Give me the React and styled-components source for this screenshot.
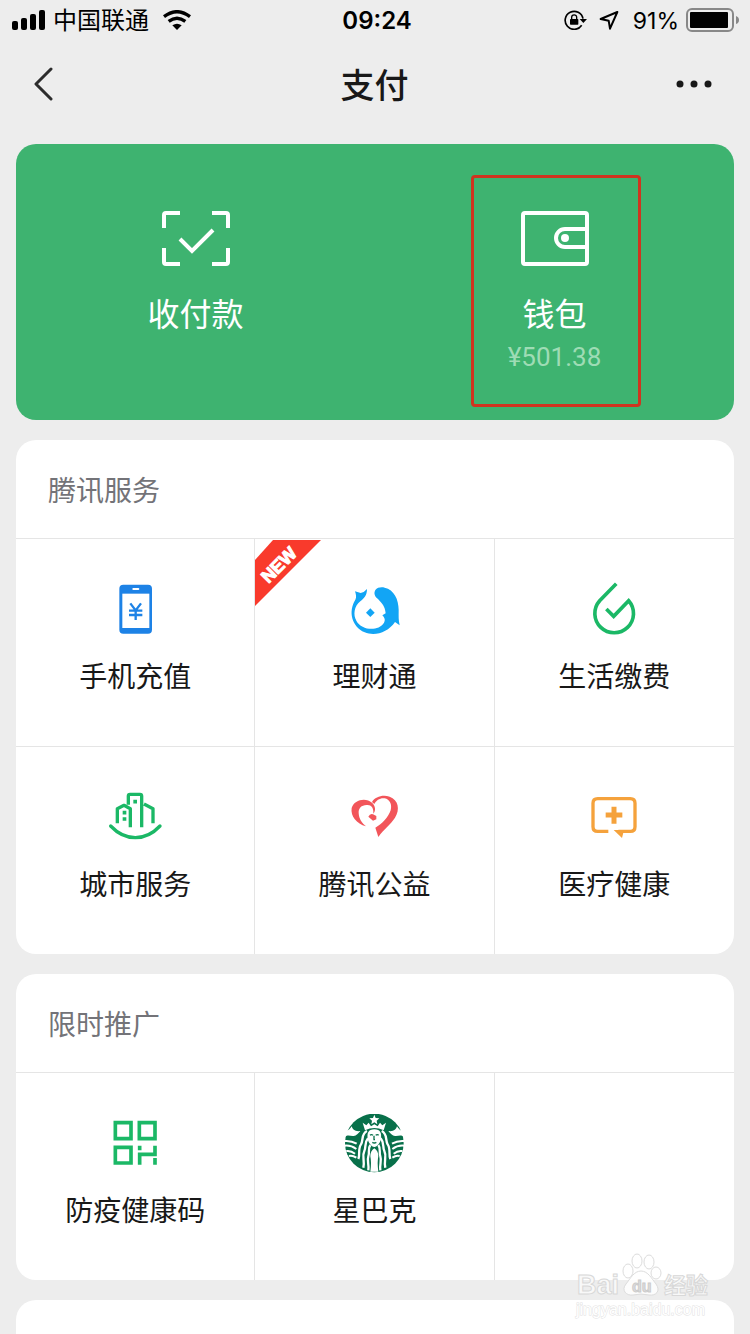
import React from "react";
import styled, { createGlobalStyle } from "styled-components";

const GlobalStyle = createGlobalStyle`
  * {
    box-sizing: border-box;
  }

  body {
    margin: 0;
    background: #ededed;
    color: #181818;
    font-family: "Liberation Sans", "Noto Sans CJK SC", sans-serif;
  }

  button {
    margin: 0;
    padding: 0;
    border: 0;
    background: none;
    color: inherit;
    font: inherit;
    cursor: pointer;
  }

  svg {
    display: block;
    flex-shrink: 0;
  }
`;

/* status bar icons */

const SignalIcon = () => (
  <svg width="34" height="20" viewBox="0 0 34 20">
    <rect x="0" y="11" width="6" height="9" rx="2" />
    <rect x="9" y="8" width="6" height="12" rx="2" />
    <rect x="18" y="4" width="6" height="16" rx="2" />
    <rect x="27" y="0" width="6" height="20" rx="2" />
  </svg>
);

const WifiIcon = () => (
  <svg width="28" height="20" viewBox="0 0 84 60">
    <g fill="none" stroke="#000" strokeWidth="10">
      <path d="M3 20Q42 -10 81 20" />
      <path d="M17 34Q42 15 67 34" />
    </g>
    <path d="M28 46Q42 36 56 46L42 60z" />
  </svg>
);

const LockIcon = () => (
  <svg width="23" height="20" viewBox="0 0 69 60">
    <path
      d="M53 46A27 27 0 1 1 57 26"
      fill="none"
      stroke="#000"
      strokeWidth="5"
    />
    <path d="M47 27H69L58 39z" />
    <rect x="18" y="27" width="25" height="17" rx="2" />
    <path d="M23 28V22a7 7 0 0 1 15 0V28" fill="none" stroke="#000" strokeWidth="4" />
  </svg>
);

const LocationIcon = () => (
  <svg width="20" height="20" viewBox="0 0 60 60">
    <path
      d="M55 6L5 27L29 32L33 56z"
      fill="none"
      stroke="#000"
      strokeWidth="6"
      strokeLinejoin="round"
    />
  </svg>
);

const BatteryIcon = () => (
  <svg width="53" height="24" viewBox="0 0 53 24">
    <rect x="1" y="1" width="46" height="22" rx="5" fill="none" stroke="#888" strokeWidth="2" />
    <rect x="4" y="4" width="38" height="16" rx="1" />
    <path d="M50 8q3 1 3 4t-3 4z" fill="#888" />
  </svg>
);

const BackIcon = () => (
  <svg width="20" height="34" viewBox="0 0 20 34">
    <path
      d="M18 2L3 17L18 32"
      fill="none"
      stroke="#2c2c2c"
      strokeWidth="3"
      strokeLinecap="round"
      strokeLinejoin="round"
    />
  </svg>
);

const MoreIcon = () => (
  <svg width="36" height="8" viewBox="0 0 36 8" fill="#181818">
    <circle cx="4" cy="4" r="3.5" />
    <circle cx="18" cy="4" r="3.5" />
    <circle cx="32" cy="4" r="3.5" />
  </svg>
);

/* green card icons */

const ScanIcon = () => (
  <svg width="68" height="56" viewBox="0 0 68 56" fill="none" stroke="#fff" strokeWidth="4">
    <path d="M2 18V5q0-2 2-2H18M50 3H64q2 0 2 2V18M66 38V52q0 2-2 2H50M18 54H4q-2 0-2-2V38" />
    <path d="M18 29L30 41L51 20" />
  </svg>
);

const WalletIcon = () => (
  <svg width="68" height="56" viewBox="0 0 68 56" fill="none" stroke="#fff" strokeWidth="4">
    <rect x="2" y="3" width="64" height="51" rx="2" />
    <path d="M66 19H44a9 9 0 0 0 0 18H66" />
    <circle cx="44" cy="28" r="4" fill="#fff" stroke="none" />
  </svg>
);

/* service icons */

const PhoneIcon = () => (
  <svg width="60" height="60" viewBox="135 60 180 180">
    <rect x="178" y="74" width="98" height="147" rx="12" fill="#1d82e6" />
    <rect x="187" y="101" width="81" height="103" fill="#fff" />
    <rect x="217" y="84" width="21" height="6" rx="3" fill="#fff" />
    <path
      d="M211 130L227 151L243 130M227 150V180M207 152H247M207 165H247"
      fill="none"
      stroke="#1d82e6"
      strokeWidth="7"
    />
  </svg>
);

const FinanceIcon = () => (
  <svg width="60" height="60" viewBox="283 135 180 180" fill="#12a5f5">
    <path d="M316 169L333 174Q345 171 352 162C352 182 343 190 332 199C313 214 310 240 320 257C336 287 386 290 403 263C407 255 406 250 398 241L408 235C406 214 398 206 385 192C374 184 372 174 377 165C383 157 395 156 405 158C433 164 447 193 447 225C447 243 446 255 450 271L436 261C415 292 376 305 345 292C306 274 295 230 317 194C321 187 319 178 316 169z" />
    <path d="M362 220L375 233L362 246L349 233z" />
  </svg>
);

const BillIcon = () => (
  <svg width="60" height="60" viewBox="118 30 180 180">
    <path
      d="M211 45L165 92A58 58 0 1 0 252 92L207 139L189 121"
      fill="none"
      stroke="#1bb866"
      strokeWidth="11"
      strokeLinecap="square"
    />
  </svg>
);

const CityIcon = () => (
  <svg width="60" height="60" viewBox="137 24 180 180" fill="none" stroke="#1bb866">
    <path d="M154 138Q187 173 228 173T302 138" strokeWidth="10" strokeLinecap="round" />
    <path
      d="M174 130V86L194 76L213 86V142M207 74V48q0-5 5-5H242q5 0 5 5V142M254 72L281 86V130"
      strokeWidth="10"
      strokeLinejoin="round"
    />
    <path d="M190 98H201M190 117H201M222 65H233" strokeWidth="11" />
  </svg>
);

const CharityIcon = () => (
  <svg width="60" height="60" viewBox="103 24 180 180" fill="#f2555a">
    <path d="M169 139C141 132 122 108 126 84C133 59 168 51 187 68C198 78 199 92 191 101C192 88 188 78 178 76C158 72 146 84 147 99C148 117 157 129 169 139z" />
    <path d="M187 66C196 50 220 43 240 50C266 59 272 88 256 113C242 134 222 148 206 171L197 143C218 131 236 112 243 91C248 73 240 58 225 55C212 53 200 60 194 72z" />
    <path d="M176 110Q182 99 190 103L200 108V118L190 122z" />
  </svg>
);

const MedicalIcon = () => (
  <svg width="60" height="60" viewBox="823 24 180 180">
    <path
      d="M896 154H864Q850 154 850 140V70Q850 56 864 56H962Q976 56 976 70V140Q976 154 962 154H926"
      fill="none"
      stroke="#f5a23c"
      strokeWidth="10"
    />
    <path d="M912 150H943L937 174z" fill="#f5a23c" />
    <path d="M888 105H938M913 80V131" stroke="#f5a23c" strokeWidth="15" />
  </svg>
);

const CodeIcon = () => (
  <svg width="60" height="60" viewBox="136 42 180 180" fill="none" stroke="#1bb866" strokeWidth="11">
    <path d="M167 68H214V116H167zM239 68H286V116H239zM167 142H214V189H167z" />
    <path d="M240 137V151M286 137V163H240V194M286 174V194" />
  </svg>
);

const HairHalf = () => (
  <g>
    <path d="M128 96C110 104 118 122 110 136C100 150 108 166 102 180" />
    <path d="M131 118C119 132 126 144 120 156C112 172 122 182 117 206" />
    <path d="M138 138C129 150 137 160 132 172C127 186 135 196 132 214" />
  </g>
);

const FinHalf = () => (
  <g>
    <path d="M63 96C71 97 77 90 82 82C85 92 92 98 108 96C102 104 96 110 88 111C78 112 70 106 62 114z" />
    <path
      d="M60 126Q80 124 97 134M61 140Q80 138 96 150M66 156Q80 154 92 164M74 171Q84 168 96 176"
      fill="none"
      stroke="#fff"
      strokeWidth="6"
    />
  </g>
);

const CoffeeIcon = () => (
  <svg width="60" height="60" viewBox="59 45 180 180">
    <circle cx="150" cy="132" r="88" fill="#08704a" />
    <g fill="#fff">
      <path d="M150 47L154 57L165 58L157 65L159 76L150 70L141 76L143 65L135 58L146 57z" />
      <path d="M115 71L126 79L133 71L140 82L150 76L160 82L167 71L174 79L185 71L178 94Q150 80 122 94z" />
      <path d="M150 91C131 91 128 104 130 118C132 133 141 143 150 144C159 143 168 133 170 118C172 104 169 91 150 91z" />
      <path d="M150 148Q162 156 162 172Q158 190 162 218H138Q142 190 138 172Q138 156 150 148z" />
      <FinHalf />
      <g transform="translate(300 0) scale(-1 1)">
        <FinHalf />
      </g>
    </g>
    <g fill="none" stroke="#fff" strokeWidth="7">
      <HairHalf />
      <g transform="translate(300 0) scale(-1 1)">
        <HairHalf />
      </g>
    </g>
    <path
      d="M137 109Q141 105 146 109M154 109Q159 105 163 109M149 110V122H152M144 130Q150 134 156 130"
      fill="none"
      stroke="#08704a"
      strokeWidth="4"
    />
  </svg>
);

const tencentServices = [
  { name: "手机充值", Icon: PhoneIcon },
  { name: "理财通", Icon: FinanceIcon, isNew: true },
  { name: "生活缴费", Icon: BillIcon },
  { name: "城市服务", Icon: CityIcon },
  { name: "腾讯公益", Icon: CharityIcon },
  { name: "医疗健康", Icon: MedicalIcon },
];

const promotions = [
  { name: "防疫健康码", Icon: CodeIcon },
  { name: "星巴克", Icon: CoffeeIcon },
];

const NewBadge = () => (
  <Ribbon width="66" height="66" viewBox="0 0 66 66">
    <path d="M18 0H66L0 66V20z" fill="#f93a2c" />
    <text
      x="24"
      y="31"
      transform="rotate(-45 24 25)"
      textAnchor="middle"
      fill="#fff"
      stroke="#fff"
      fontSize="18"
      fontWeight="700"
    >
      NEW
    </text>
  </Ribbon>
);

const ServiceSection = ({ title, items }) => (
  <Card>
    <SectionTitle>{title}</SectionTitle>
    <Grid>
      {items.map(({ name, Icon, isNew }) => (
        <Cell key={name}>
          {isNew && <NewBadge />}
          <Icon />
          <CellLabel>{name}</CellLabel>
        </Cell>
      ))}
    </Grid>
  </Card>
);

const Watermark = () => (
  <WatermarkBox>
    <svg width="136" height="50" viewBox="0 0 136 50">
      <g fill="#fff" fillOpacity="0.8" stroke="#dcdcdc">
        <ellipse cx="54" cy="19" rx="5" ry="7" />
        <ellipse cx="63" cy="9" rx="5" ry="7" />
        <ellipse cx="75" cy="10" rx="5" ry="7" />
        <ellipse cx="82" cy="21" rx="5" ry="6" />
        <path d="M67 19C74 19 78 27 82 32C87 39 82 44 75 43Q67 41 59 43C52 44 47 38 52 32C56 27 60 19 67 19z" />
      </g>
      <g fill="#f8f8f8" stroke="#d8d8d8" fontWeight="700">
        <text x="3" y="42" fontSize="27">Bai</text>
        <text x="90" y="41" fontSize="22">经验</text>
        <text x="58" y="40" fontSize="16" fill="#ddd" stroke="#ccc">du</text>
      </g>
    </svg>
    <WatermarkUrl>jingyan.baidu.com</WatermarkUrl>
  </WatermarkBox>
);

const App = () => {
  return (
    <Page>
      <GlobalStyle />
      <StatusBar>
        <StatusLeft>
          <SignalIcon />
          <Carrier>中国联通</Carrier>
          <WifiIcon />
        </StatusLeft>
        <Time>09:24</Time>
        <StatusRight>
          <IconPair>
            <LockIcon />
            <LocationIcon />
          </IconPair>
          <Percent>91%</Percent>
          <BatteryIcon />
        </StatusRight>
      </StatusBar>

      <NavBar>
        <NavButton aria-label="返回">
          <BackIcon />
        </NavButton>
        <NavTitle>支付</NavTitle>
        <NavButton $end aria-label="更多">
          <MoreIcon />
        </NavButton>
      </NavBar>

      <Main>
        <PayCard>
          <PayItem>
            <ScanIcon />
            <PayLabel>收付款</PayLabel>
          </PayItem>
          <PayItem>
            <WalletIcon />
            <PayLabel>钱包</PayLabel>
            <Balance>¥501.38</Balance>
            <Highlight />
          </PayItem>
        </PayCard>

        <ServiceSection title="腾讯服务" items={tencentServices} />
        <ServiceSection title="限时推广" items={promotions} />
        <NextCard />
      </Main>

      <Watermark />
    </Page>
  );
};

const Page = styled.div`
  position: relative;
  display: flex;
  flex-direction: column;
  min-height: 100vh;
`;

const StatusBar = styled.div`
  display: grid;
  grid-template-columns: 1fr auto 1fr;
  align-items: center;
  height: 40px;
  padding: 0 11px 0 12px;
  color: #000;
  font-family: Inter, "Noto Sans CJK SC", sans-serif;
  font-size: 24px;
  line-height: 38px;
`;

const StatusLeft = styled.div`
  display: flex;
  align-items: center;
`;

const Carrier = styled.span`
  margin: 0 14px 0 7px;
  padding-top: 2px;
`;

const Time = styled.span`
  padding: 2px 0 0 3px;
  font-weight: 600;
`;

const StatusRight = styled.div`
  display: flex;
  align-items: center;
  justify-content: flex-end;
`;

const IconPair = styled.div`
  display: flex;
  gap: 12px;
`;

const Percent = styled.span`
  margin: 0 7px 0 14px;
  padding-top: 2px;
  font-size: 23px;
`;

const NavBar = styled.header`
  display: grid;
  grid-template-columns: 1fr auto 1fr;
  align-items: center;
  height: 88px;
  padding: 0 38px 0 33px;
`;

const NavButton = styled.button`
  justify-self: ${(props) => (props.$end ? "end" : "start")};
`;

const NavTitle = styled.h1`
  margin: 0;
  padding: 3px 0 0 4px;
  font-size: 34px;
  font-weight: 500;
  line-height: 48px;
`;

const Main = styled.main`
  display: flex;
  flex: 1;
  flex-direction: column;
  gap: 20px;
  padding: 16px 16px 0;
`;

const PayCard = styled.section`
  display: grid;
  grid-template-columns: 1fr 1fr;
  height: 276px;
  border-radius: 20px;
  background: #3eb370;
  color: #fff;
`;

const PayItem = styled.button`
  position: relative;
  display: flex;
  flex-direction: column;
  align-items: center;
  padding-top: 66px;
`;

const PayLabel = styled.span`
  margin-top: 27px;
  font-size: 32px;
  line-height: 44px;
`;

const Balance = styled.span`
  margin-top: 5px;
  color: #9edcb5;
  font-family: Roboto, sans-serif;
  font-size: 26px;
  line-height: 30px;
`;

/* red frame drawn over the wallet entry */
const Highlight = styled.span`
  position: absolute;
  top: 31px;
  bottom: 13px;
  left: 50%;
  width: 170px;
  margin-left: -84px;
  border: 3px solid #d0341f;
  border-radius: 4px;
`;

const Card = styled.section`
  overflow: hidden;
  border-radius: 20px;
  background: #fff;
`;

const NextCard = styled(Card)`
  flex: 1;
  border-radius: 20px 20px 0 0;
`;

const SectionTitle = styled.h2`
  margin: 0;
  padding: 6px 32px 0;
  color: #737378;
  font-size: 28px;
  font-weight: 400;
  line-height: 92px;
`;

const Grid = styled.div`
  display: grid;
  grid-template-columns: repeat(3, 1fr);
  background: linear-gradient(#e5e5e5, #e5e5e5) top / 100% 1px no-repeat;
`;

const Cell = styled.button`
  position: relative;
  display: flex;
  flex-direction: column;
  align-items: center;
  gap: 18px;
  height: 208px;
  padding-top: 41px;
  border-top: 1px solid #e5e5e5;

  &:not(:nth-child(3n)) {
    border-right: 1px solid #e5e5e5;
  }
`;

const CellLabel = styled.span`
  font-size: 28px;
  line-height: 40px;
`;

const Ribbon = styled.svg`
  position: absolute;
  top: 1px;
  left: 0;
`;

const WatermarkBox = styled.div`
  position: absolute;
  right: 40px;
  bottom: 14px;
  pointer-events: none;
`;

const WatermarkUrl = styled.div`
  margin-top: -2px;
  padding-left: 2px;
  color: #fff;
  font-size: 16px;
  line-height: 20px;
  -webkit-text-stroke: 1px #e2e2e2;
  paint-order: stroke;
`;

export default App;
